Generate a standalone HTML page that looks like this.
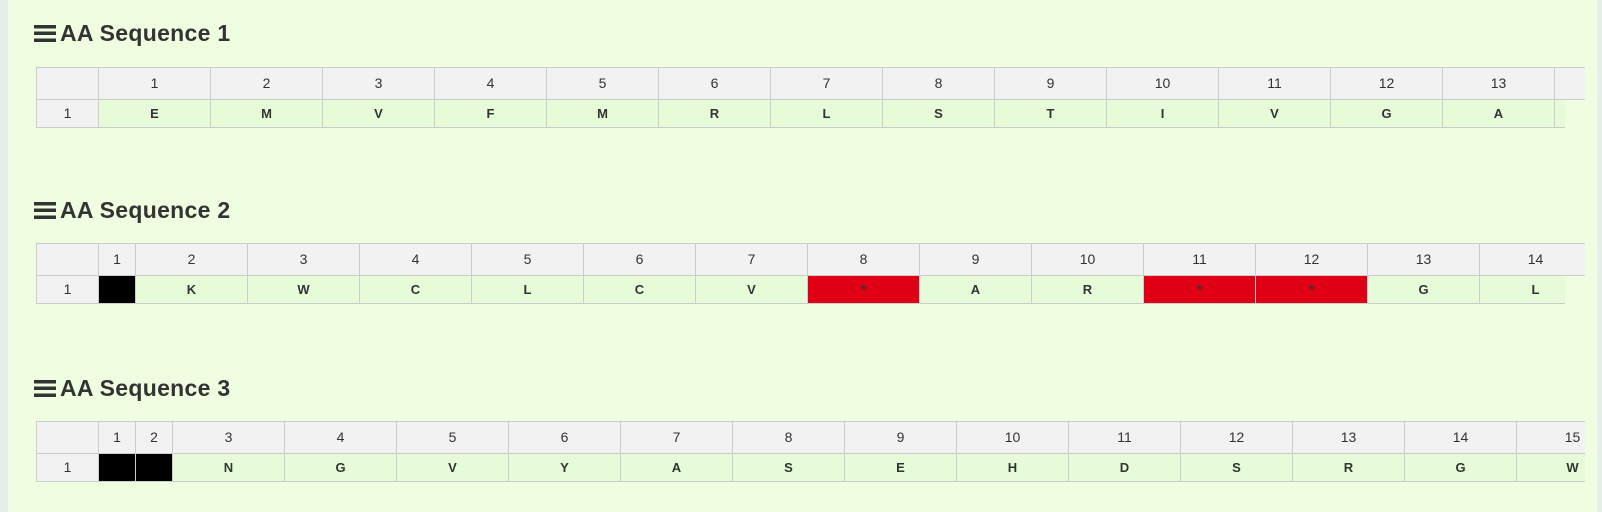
<!DOCTYPE html>
<html><head><style>
body{margin:0;width:1602px;height:512px;background:#effde0;font-family:"Liberation Sans",sans-serif;position:relative;overflow:hidden}
.strip{position:absolute;left:0;top:0;width:8px;height:512px;background:#e6f0ea}
.rstrip{position:absolute;left:1597px;top:0;width:5px;height:512px;background:#e6f0ea}
h2{position:absolute;left:34px;margin:0;font-size:23px;font-weight:bold;color:#333;line-height:30px;letter-spacing:0.3px}
.ham{display:inline-block;width:22px;height:17px;vertical-align:-1px;margin-right:4px;background:linear-gradient(#333 0 3.5px,transparent 3.5px 6.75px,#333 6.75px 10.25px,transparent 10.25px 13.5px,#333 13.5px 17px)}
.t{position:absolute;left:36px;width:1548px;overflow:hidden;border-top:1px solid #ccc;border-left:1px solid #ccc}
.r{display:flex;white-space:nowrap}
.r div{flex:none;box-sizing:border-box;border-right:1px solid #ccc;border-bottom:1px solid #ccc;text-align:center;font-size:14px;color:#333}
.h div{height:32px;line-height:31px;background:#f2f2f2}
.d div{height:28px;line-height:27px;background:#e6fcd8;font-weight:bold;font-size:13px}
.d div.n{background:#f2f2f2;font-weight:normal;font-size:14px}
.d div.k{background:#000}
.d div.x{background:#e00016}
.r div.f{width:62px}
.r div{width:112px}
.r div.s{width:37px}
.cov{position:absolute;left:1565px;width:20px;height:29px;background:#effde0}
</style></head><body>
<div class="strip"></div><div class="rstrip"></div>
<h2 style="top:18px"><span class="ham"></span>AA Sequence 1</h2>
<div class="t" style="top:67px">
<div class="r h"><div class="f"></div><div>1</div><div>2</div><div>3</div><div>4</div><div>5</div><div>6</div><div>7</div><div>8</div><div>9</div><div>10</div><div>11</div><div>12</div><div>13</div><div></div></div>
<div class="r d"><div class="f n">1</div><div>E</div><div>M</div><div>V</div><div>F</div><div>M</div><div>R</div><div>L</div><div>S</div><div>T</div><div>I</div><div>V</div><div>G</div><div>A</div><div></div></div>
</div>
<div class="cov" style="top:100px"></div>
<h2 style="top:195px"><span class="ham"></span>AA Sequence 2</h2>
<div class="t" style="top:243px">
<div class="r h"><div class="f"></div><div class="s">1</div><div>2</div><div>3</div><div>4</div><div>5</div><div>6</div><div>7</div><div>8</div><div>9</div><div>10</div><div>11</div><div>12</div><div>13</div><div>14</div></div>
<div class="r d"><div class="f n">1</div><div class="s k"></div><div>K</div><div>W</div><div>C</div><div>L</div><div>C</div><div>V</div><div class="x">*</div><div>A</div><div>R</div><div class="x">*</div><div class="x">*</div><div>G</div><div>L</div></div>
</div>
<div class="cov" style="top:276px"></div>
<h2 style="top:373px"><span class="ham"></span>AA Sequence 3</h2>
<div class="t" style="top:421px">
<div class="r h"><div class="f"></div><div class="s">1</div><div class="s">2</div><div>3</div><div>4</div><div>5</div><div>6</div><div>7</div><div>8</div><div>9</div><div>10</div><div>11</div><div>12</div><div>13</div><div>14</div><div>15</div></div>
<div class="r d"><div class="f n">1</div><div class="s k"></div><div class="s k"></div><div>N</div><div>G</div><div>V</div><div>Y</div><div>A</div><div>S</div><div>E</div><div>H</div><div>D</div><div>S</div><div>R</div><div>G</div><div>W</div></div>
</div>
</body></html>
